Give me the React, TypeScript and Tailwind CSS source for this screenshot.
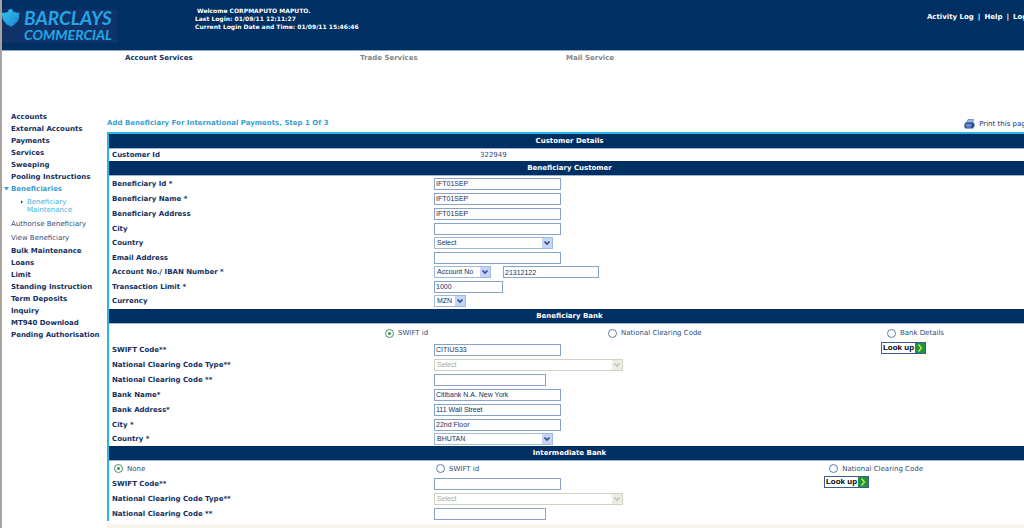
import { useId, type ReactNode } from 'react';

const mainLinks = [
  'Accounts',
  'External Accounts',
  'Payments',
  'Services',
  'Sweeping',
  'Pooling Instructions',
];

const moreLinks = [
  'Bulk Maintenance',
  'Loans',
  'Limit',
  'Standing Instruction',
  'Term Deposits',
  'Inquiry',
  'MT940 Download',
  'Pending Authorisation',
];

function Eagle() {
  return (
    <svg viewBox="0 0 18 18" className="h-[18px] w-[18px] shrink-0" aria-hidden="true">
      <defs>
        <linearGradient id="eagle" x1="0" y1="0" x2="1" y2="1">
          <stop offset="0" stopColor="#3cc4f2" />
          <stop offset="1" stopColor="#1583cb" />
        </linearGradient>
      </defs>
      <path
        d="M0 3.400C1.600 4.400 3.400 4.200 4.600 2.800 5.200 3.400 5.800 3.500 6.400 3.200 5.900 2.300 6 1.200 7 .6 8.400-.1 10.200.2 10.900 1.300 11.300 2 11.100 2.800 11.300 3.500 11.900 3.500 12.400 3 12.900 2.400 14.200 3.900 15.900 4.100 17.200 3.200 17.600 6 17.300 8.700 16.400 10.800 15.900 12.200 14.800 13.300 13.600 14.300 12.800 15.600 11.500 16.500 10.200 16.700L9.200 18 7.800 16.700C6.200 16.500 4.900 15.700 4 14.400 2.400 13.200 1.200 11.300.6 9.300 0 7.400-.2 5.300 0 3.400Z"
        fill="url(#eagle)"
      />
    </svg>
  );
}

function Printer() {
  return (
    <svg viewBox="0 0 11 10" className="h-[10px] w-[11px]" aria-hidden="true">
      <path d="M4 .5H9.500L8.500 4H2.500Z" fill="#9fb8e0" stroke="#4c72b0" strokeWidth=".7" />
      <path d="M1.500 3.500H9.500L10.600 5V7L9 9.500H1.200L.3 8V5.500Z" fill="#2a55a0" />
      <path d="M2 5.400H7.500L7 6.800H1.600Z" fill="#9db8e4" />
      <path d="M2.500 8H7" stroke="#8facde" strokeWidth=".8" />
    </svg>
  );
}

function Band({ children }: { children: ReactNode }) {
  return (
    <h2 className="h-[15px] border-b border-[#9db4cf] bg-[#003063] text-center text-[7px] font-bold leading-[14px] text-white">
      {children}
    </h2>
  );
}

type RowProps = {
  label: string;
  size?: 'tight' | 'normal' | 'loose';
  children: (id: string) => ReactNode;
  action?: ReactNode;
};

const rowHeights = {
  tight: 'h-[14px]',
  normal: 'h-[15px]',
  loose: 'h-[16px]',
};

function Row({ label, size = 'normal', children, action }: RowProps) {
  const id = useId();
  return (
    <div className={`flex items-center ${rowHeights[size]}`}>
      <label htmlFor={id} className="w-[325px] shrink-0 pl-[3px] font-bold">
        {label}
      </label>
      <div className="flex flex-1 items-center">{children(id)}</div>
      {action}
    </div>
  );
}

const fieldClass =
  'h-3 border border-[#86a3cb] bg-white px-px font-["Liberation_Sans",Arial,sans-serif] text-[7px] leading-[10px] text-[#12305f]';

function Field({ id, value = '', width = 'w-[127px]', label }: { id?: string; value?: string; width?: string; label?: string }) {
  return <input id={id} aria-label={label} type="text" defaultValue={value} className={`${fieldClass} ${width}`} />;
}

function Choice({ id, value, width, disabled = false }: { id: string; value: string; width: string; disabled?: boolean }) {
  return (
    <span className={`relative block ${width}`}>
      <select
        id={id}
        disabled={disabled}
        className={`block h-3 w-full appearance-none border bg-white pl-0.5 font-["Liberation_Sans",Arial,sans-serif] text-[7px] leading-[10px] disabled:opacity-100 ${
          disabled ? 'border-[#d3d0c4] text-[#aaa898]' : 'border-[#a3bad6] text-[#12305f]'
        }`}
      >
        <option>{value}</option>
      </select>
      <svg
        viewBox="0 0 10 10"
        className={`pointer-events-none absolute right-px top-px h-[10px] w-[10px] ${
          disabled ? 'bg-[#eeede5] text-[#c5c3b6]' : 'bg-[#c4d4fb] text-[#34507f]'
        }`}
        aria-hidden="true"
      >
        <path d="M2.500 3.500 5 6 7.500 3.500" fill="none" stroke="currentColor" strokeWidth="1.700" />
      </svg>
    </span>
  );
}

function Radio({ name, label, checked = false }: { name: string; label: string; checked?: boolean }) {
  return (
    <label className="flex items-center gap-1 whitespace-nowrap text-[#2c4c7c]">
      <input
        type="radio"
        name={name}
        defaultChecked={checked}
        className="h-[9px] w-[9px] appearance-none rounded-full border border-[#5b7ea5] bg-white bg-clip-content p-[2px] checked:border-[#4d8a72] checked:bg-[#2f9e3f]"
      />
      {label}
    </label>
  );
}

function LookUp() {
  return (
    <button type="button" className="flex h-3 w-[45px] items-stretch self-start border border-[#3c5a94] bg-white">
      <span className="flex-1 text-center font-['Liberation_Sans',Arial,sans-serif] text-[8px] font-bold leading-[10px] text-black">
        Look up
      </span>
      <svg viewBox="0 0 10 10" className="h-[10px] w-[10px] bg-[#23933b]" aria-hidden="true">
        <path d="M3.500 1.500 6.500 5 3.500 8.500" fill="none" stroke="#c3ee5a" strokeWidth="1.300" />
      </svg>
    </button>
  );
}

export default function App() {
  return (
    <div className="min-h-screen overflow-hidden border-l-2 border-[#a8a49c] bg-white font-['DejaVu_Sans',Verdana,sans-serif] text-[7px] leading-[10px] text-[#12305f]">
      <header className="flex h-[51px] items-start border-b border-[#8fa9c8] bg-[#003063] text-white">
        <div className="mt-[9px] flex h-[34px] w-[116px] shrink-0 gap-1 bg-[#0f3268]">
          <Eagle />
          <div className="whitespace-nowrap font-['Lato',sans-serif] font-bold italic text-[#22a7e6]">
            <p className="text-[19px] leading-[18px]">BARCLAYS</p>
            <p className="text-[14px] leading-[16px]">COMMERCIAL</p>
          </div>
        </div>
        <div className="ml-[77px] mt-[7px] flex-1 whitespace-nowrap text-[6px] font-bold leading-[8px]">
          <p className="pl-0.5">Welcome CORPMAPUTO MAPUTO.</p>
          <p>Last Login: 01/09/11 12:11:27</p>
          <p>Current Login Date and Time: 01/09/11 15:46:46</p>
        </div>
        <nav className="-mr-5 mt-3 flex gap-1 whitespace-nowrap font-bold">
          <a href="#activity">Activity Log</a>
          <span>|</span>
          <a href="#help">Help</a>
          <span>|</span>
          <a href="#logout">Log Out</a>
        </nav>
      </header>

      <nav className="flex h-[59px] pl-[123px] pt-0.5 font-bold text-[#858585]">
        <a href="#account" className="w-[235px] text-[#12305f]">Account Services</a>
        <a href="#trade" className="w-[206px]">Trade Services</a>
        <a href="#mail">Mail Service</a>
      </nav>

      <div className="flex">
        <nav className="w-[105px] shrink-0 whitespace-nowrap pl-[9px] pt-px font-bold leading-[12px]">
          {mainLinks.map((t) => (
            <a key={t} href="#menu" className="block">{t}</a>
          ))}
          <a href="#beneficiaries" className="-ml-[7px] flex items-center gap-0.5 text-[#3a9fd0]">
            <svg viewBox="0 0 5 4" className="h-1 w-[5px]" aria-hidden="true">
              <path d="M0 0H5L2.500 3.500Z" fill="currentColor" />
            </svg>
            Beneficiaries
          </a>
          <a href="#maintenance" className="mb-[3px] mt-[3px] flex gap-1 pl-2.5 font-normal leading-[8px] text-[#3fb0e0]">
            <svg viewBox="0 0 2 8" className="h-2 w-0.5" aria-hidden="true">
              <path d="M0 2.500 2 4 0 5.500Z" fill="#12305f" />
            </svg>
            <span>Beneficiary<br />Maintenance</span>
          </a>
          <a href="#authorise" className="block font-normal leading-[14px] text-[#2c4c7c]">Authorise Beneficiary</a>
          <a href="#view" className="block font-normal leading-[14px] text-[#2c4c7c]">View Beneficiary</a>
          {moreLinks.map((t) => (
            <a key={t} href="#menu" className="block">{t}</a>
          ))}
        </nav>

        <main className="-mr-1.5 min-w-0 flex-1">
          <div className="flex h-[22px] items-center justify-between pt-1">
            <h1 className="text-[7px] font-bold text-[#3a9fd0]">
              Add Beneficiary For International Payments, Step 1 Of 3
            </h1>
            <a href="#print" className="flex items-center gap-1 whitespace-nowrap pt-0.5">
              <Printer />
              Print this page
            </a>
          </div>

          <form className="border-l-2 border-t-2 border-[#2bb5e4]">
            <Band>Customer Details</Band>
            <div className="flex h-3 items-center">
              <span className="w-[371px] pl-[3px] font-bold">Customer Id</span>
              <span className="text-[#2c4c7c]">322949</span>
            </div>

            <Band>Beneficiary Customer</Band>
            <div className="pb-px">
              <Row label="Beneficiary Id *">{(id) => <Field id={id} value="IFT01SEP" />}</Row>
              <Row label="Beneficiary Name *">{(id) => <Field id={id} value="IFT01SEP" />}</Row>
              <Row label="Beneficiary Address">{(id) => <Field id={id} value="IFT01SEP" />}</Row>
              <Row label="City">{(id) => <Field id={id} />}</Row>
              <Row label="Country" size="tight">{(id) => <Choice id={id} value="Select" width="w-[119px]" />}</Row>
              <Row label="Email Address">{(id) => <Field id={id} />}</Row>
              <Row label="Account No./ IBAN Number *" size="tight">
                {(id) => (
                  <div className="flex gap-3">
                    <Choice id={id} value="Account No" width="w-[57px]" />
                    <Field label="Account number" value="21312122" width="w-[96px]" />
                  </div>
                )}
              </Row>
              <Row label="Transaction Limit *">{(id) => <Field id={id} value="1000" width="w-[69px]" />}</Row>
              <Row label="Currency" size="tight">{(id) => <Choice id={id} value="MZN" width="w-8" />}</Row>
            </div>

            <Band>Beneficiary Bank</Band>
            <div className="flex h-[18px] items-center pl-[276px] pr-[86px]">
              <div className="w-[223px]">
                <Radio name="bank" label="SWIFT id" checked />
              </div>
              <div className="flex flex-1 justify-between">
                <Radio name="bank" label="National Clearing Code" />
                <Radio name="bank" label="Bank Details" />
              </div>
            </div>
            <Row label="SWIFT Code**" action={<div className="self-start pr-[104px]"><LookUp /></div>}>
              {(id) => <Field id={id} value="CITIUS33" />}
            </Row>
            <Row label="National Clearing Code Type**" size="loose">
              {(id) => <Choice id={id} value="Select" width="w-[189px]" disabled />}
            </Row>
            <Row label="National Clearing Code **" size="tight">{(id) => <Field id={id} width="w-28" />}</Row>
            <Row label="Bank Name*">{(id) => <Field id={id} value="Citibank N.A. New York" />}</Row>
            <Row label="Bank Address*">{(id) => <Field id={id} value="111 Wall Street" />}</Row>
            <Row label="City *">{(id) => <Field id={id} value="22nd Floor" />}</Row>
            <Row label="Country *" size="tight">{(id) => <Choice id={id} value="BHUTAN" width="w-[119px]" />}</Row>

            <Band>Intermediate Bank</Band>
            <div className="flex h-[15px] items-center">
              <div className="w-[327px] shrink-0 pl-[5px]">
                <Radio name="intermediate" label="None" checked />
              </div>
              <div className="flex flex-1 justify-between pr-[107px]">
                <Radio name="intermediate" label="SWIFT id" />
                <Radio name="intermediate" label="National Clearing Code" />
              </div>
            </div>
            <Row label="SWIFT Code**" action={<div className="self-start pr-[161px]"><LookUp /></div>}>
              {(id) => <Field id={id} />}
            </Row>
            <Row label="National Clearing Code Type**" size="loose">
              {(id) => <Choice id={id} value="Select" width="w-[189px]" disabled />}
            </Row>
            <Row label="National Clearing Code **" size="tight">{(id) => <Field id={id} width="w-28" />}</Row>
          </form>
          <div className="mt-[3px] h-1 bg-[#f5f3ec]" />
        </main>
      </div>
    </div>
  );
}
